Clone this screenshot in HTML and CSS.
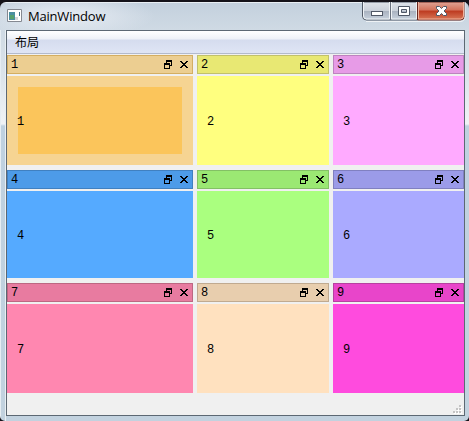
FILE: index.html
```html
<!DOCTYPE html>
<html lang="zh">
<head>
<meta charset="utf-8">
<title>MainWindow</title>
<link rel="stylesheet" href="styles.css">
</head>
<body>
<svg class="defs" width="0" height="0">
  <symbol id="float" viewBox="0 0 8 9"><path d="M2 0h6v6H6v3H0V3h2zM3 2v1h3v2h1V2zM1 5v3h4V5z" fill-rule="evenodd"/></symbol>
  <symbol id="close" viewBox="0 0 8 7"><path d="M0 0h2v1h1v1h2V1h1V0h2v1H7v1H6v1H5v1h1v1h1v1h1v1H6V6H5V5H3v1H2v1H0V6h1V5h1V4h1V3H2V2H1V1H0z"/></symbol>
</svg>
<div class="window">
  <header class="titlebar">
    <svg class="app-icon" width="16" height="14" viewBox="0 0 16 14"><path fill="#fff" stroke="#858991" d="M.5.5h14v12H.5z"/><path fill="#4a8fa0" d="M2 3h6v8H2z"/><path fill="#55a06e" d="M3 6h4v4H3z"/><path fill="#d4d6d8" d="M8 8h3v3H8z"/><path fill="#3e7085" d="M12 3h1v4h-1z"/></svg>
    <h1 class="title">MainWindow</h1>
    <svg class="controls" width="105" height="21" viewBox="0 0 105 21">
      <defs>
        <linearGradient id="glass" x2="0" y2="1"><stop stop-color="#dfe3e9"/><stop offset=".48" stop-color="#cbd1da"/><stop offset=".5" stop-color="#a9b2bf"/><stop offset="1" stop-color="#c9d3df"/></linearGradient>
        <linearGradient id="red" x2="0" y2="1"><stop stop-color="#dfa596"/><stop offset=".45" stop-color="#d3715a"/><stop offset=".5" stop-color="#bd3a20"/><stop offset="1" stop-color="#d97959"/></linearGradient>
      </defs>
      <path fill="url(#glass)" stroke="#535b68" d="M1.500 0v14q0 4 4 4h51V0z"/>
      <path fill="url(#red)" stroke="#68261f" d="M56.500 0v18h43q4 0 4-4V0z"/>
      <path fill="none" stroke="#eef2f5" d="M2.500 0v14q0 3 3 3h23V0m2 0v17h25V0"/>
      <path stroke="#6a717d" d="M29.500 0v18"/>
      <path fill="none" stroke="#efb29d" d="M57.500 0v17h42q3 0 3-3V0"/>
      <path fill="none" stroke="#eef2f5" d="M5 19.500h94q5 0 5-5V0"/>
      <rect x="10.500" y="9.500" width="11" height="4" fill="#fff" stroke="#505866"/>
      <path fill="#fff" stroke="#505866" fill-rule="evenodd" d="M37.500 4.500h11v9h-11zm3 3v3h5v-3z"/>
      <path fill="#fff" stroke="#505866" d="M75.500 4.500h3l2 2 2-2h3v2L83 9l2.500 2.500v2h-3l-2-2-2 2h-3v-2L78 9l-2.500-2.500z"/>
    </svg>
  </header>
  <main class="client">
    <nav class="menubar"><span>布局</span></nav>
    <div class="docks">
      <section class="dock d1"><header><span>1</span><svg width="8" height="9"><use href="#float"/></svg><svg width="8" height="7"><use href="#close"/></svg></header><div class="body"><div class="inner">1</div></div></section>
      <section class="dock d2"><header><span>2</span><svg width="8" height="9"><use href="#float"/></svg><svg width="8" height="7"><use href="#close"/></svg></header><div class="body">2</div></section>
      <section class="dock d3"><header><span>3</span><svg width="8" height="9"><use href="#float"/></svg><svg width="8" height="7"><use href="#close"/></svg></header><div class="body">3</div></section>
      <section class="dock d4"><header><span>4</span><svg width="8" height="9"><use href="#float"/></svg><svg width="8" height="7"><use href="#close"/></svg></header><div class="body">4</div></section>
      <section class="dock d5"><header><span>5</span><svg width="8" height="9"><use href="#float"/></svg><svg width="8" height="7"><use href="#close"/></svg></header><div class="body">5</div></section>
      <section class="dock d6"><header><span>6</span><svg width="8" height="9"><use href="#float"/></svg><svg width="8" height="7"><use href="#close"/></svg></header><div class="body">6</div></section>
      <section class="dock d7"><header><span>7</span><svg width="8" height="9"><use href="#float"/></svg><svg width="8" height="7"><use href="#close"/></svg></header><div class="body">7</div></section>
      <section class="dock d8"><header><span>8</span><svg width="8" height="9"><use href="#float"/></svg><svg width="8" height="7"><use href="#close"/></svg></header><div class="body">8</div></section>
      <section class="dock d9"><header><span>9</span><svg width="8" height="9"><use href="#float"/></svg><svg width="8" height="7"><use href="#close"/></svg></header><div class="body">9</div></section>
    </div>
    <footer class="statusbar">
      <svg width="9" height="9" viewBox="0 0 9 9"><path fill="#fff" d="M7 1h2v2H7zM4 4h2v2H4zM7 4h2v2H7zM1 7h2v2H1zM4 7h2v2H4zM7 7h2v2H7z"/><path fill="#c4c4c4" d="M6 0h2v2H6zM3 3h2v2H3zM6 3h2v2H6zM0 6h2v2H0zM3 6h2v2H3zM6 6h2v2H6z"/></svg>
    </footer>
  </main>
</div>
</body>
</html>
```
FILE: styles.css
```css
* { box-sizing: border-box; }
body { margin: 0; padding-top: 2px; height: 421px; overflow: hidden; background: #15131a; }
.defs { display: block; }
.window {
  height: 419px;
  padding: 0 4px 5px 6px;
  border-radius: 6px 6px 5px 5px;
  background:
    linear-gradient(90deg, #e6edf2 1px, transparent 1px, transparent 5px, #e9eff3 5px, #e9eff3 6px, transparent 6px) 0 28px no-repeat,
    radial-gradient(ellipse 90px 22px at 65px 14px, #e8edf4, transparent),
    linear-gradient(#e9eff4 1px, transparent 1px),
    linear-gradient(#c3d0dd 0, #cfdae4 28px, #dce4eb 75px, #f0f3f6 122px, #bfd1e0 124px, #c2d2df 100%);
}
.titlebar { display: flex; height: 28px; padding-left: 1px; }
.app-icon { margin-top: 7px; }
.title { flex: 1; margin: 4px 0 0 5px; font: 13px/20px "Open Sans", sans-serif; letter-spacing: -.2px; color: #000; }
.controls { margin-right: -1px; }
.client { height: 386px; width: 459px; border: 1px solid #5c6873; background: #f0f0f0; }
.menubar {
  height: 24px;
  padding-left: 8px;
  border-bottom: 1px solid #f0f0f0;
  box-shadow: inset 0 -1px #b3bacb;
  background: linear-gradient(#fff, #eef1f7 8px, #d5dcee 9px, #dfe5f5 22px);
  font: 12px/22px "Noto Sans CJK SC", sans-serif;
}
.docks {
  display: grid;
  grid-template-columns: 186px 132px 131px;
  grid-template-rows: 110px 108px 110px;
  gap: 5px 4px;
  font: 12px/12px "Liberation Mono", monospace;
  color: #000;
}
.dock { display: flex; flex-direction: column; gap: 2px; }
.dock header {
  display: flex;
  align-items: center;
  gap: 8px;
  height: 19px;
  padding: 0 4px 0 4px;
  background: var(--title);
  border: 1px solid var(--edge);
}
.dock header span { flex: 1; margin-left: -1px; padding-top: 1px; }
.dock .body { flex: 1; display: flex; align-items: center; padding: 2px 0 0 10px; background: var(--fill); }
.dock .inner { display: flex; align-items: center; width: 164px; height: 67px; margin: -2px 0 0 1px; padding-top: 2px; text-indent: -1px; background: #fbc55b; }
.d1 { --title: #ecce91; --edge: #d4ae61; --fill: #f6d492; }
.d2 { --title: #e8e873; --edge: #c1c16a; --fill: #ffff7f; }
.d3 { --title: #e79be7; --edge: #bd83bf; --fill: #ffaaff; }
.d4 { --title: #4d9be8; --edge: #4080c0; --fill: #55aaff; }
.d5 { --title: #9be873; --edge: #83c065; --fill: #aaff7f; }
.d6 { --title: #9b9be8; --edge: #8080c0; --fill: #aaaaff; }
.d7 { --title: #e87ba0; --edge: #bd6782; --fill: #ff87b0; }
.d8 { --title: #e8ceae; --edge: #c0aa90; --fill: #ffe1bf; }
.d9 { --title: #e845ca; --edge: #b641a0; --fill: #ff4bde; }
.statusbar { display: flex; justify-content: flex-end; align-items: flex-end; height: 22px; padding: 0 2px 1px 0; }
```
